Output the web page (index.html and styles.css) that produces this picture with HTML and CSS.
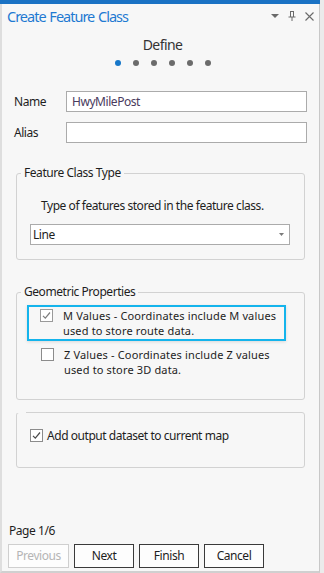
FILE: index.html
```html
<!DOCTYPE html>
<html>
<head>
<meta charset="utf-8">
<link rel="stylesheet" href="styles.css">
</head>
<body>
<div class="frame">
  <div class="panel">
    <div class="topbar"></div>
    <div class="header">
      <div class="title">Create Feature Class</div>
      <div class="tools">
        <svg class="ico" width="8" height="4" viewBox="0 0 8 4"><path d="M0 0H8L4 4Z" fill="#6a6a6a"/></svg>
        <svg class="ico" width="8" height="10" viewBox="0 0 8 10"><path d="M2 0.5H6M2.5 0.5V6M5.5 0.5V6M0.5 6H7.5M4 6V10" stroke="#6a6a6a" stroke-width="1" fill="none"/></svg>
        <svg class="ico" width="9" height="9" viewBox="0 0 9 9"><path d="M0.5 0.5L8.5 8.5M8.5 0.5L0.5 8.5" stroke="#6a6a6a" stroke-width="1.1" fill="none"/></svg>
      </div>
    </div>
    <div class="step">Define</div>
    <div class="dots">
      <span class="dot active"></span><span class="dot"></span><span class="dot"></span><span class="dot"></span><span class="dot"></span><span class="dot"></span>
    </div>

    <div class="row first">
      <div class="label">Name</div>
      <div class="input">HwyMilePost</div>
    </div>
    <div class="row">
      <div class="label">Alias</div>
      <div class="input"></div>
    </div>

    <fieldset class="group g1">
      <legend>Feature Class Type</legend>
      <div class="desc">Type of features stored in the feature class.</div>
      <div class="select">
        <span>Line</span>
        <svg width="5" height="3" viewBox="0 0 5 3"><path d="M0 0H5L2.5 3Z" fill="#7a7a7a"/></svg>
      </div>
    </fieldset>

    <fieldset class="group g2">
      <legend>Geometric Properties</legend>
      <div class="highlight">
        <div class="check-row">
          <span class="box checked dim"><svg width="11" height="11" viewBox="0 0 11 11"><path d="M2 5.8L4.3 8.2L9 2.5" stroke="#7d7d7d" stroke-width="1.2" fill="none"/></svg></span>
          <span class="ctext"><span class="ln">M Values - Coordinates include M values</span><span class="ln">used to store route data.</span></span>
        </div>
      </div>
      <div class="check-row z">
        <span class="box"></span>
        <span class="ctext"><span class="ln">Z Values - Coordinates include Z values</span><span class="ln">used to store 3D data.</span></span>
      </div>
    </fieldset>

    <fieldset class="group g3">
      <legend></legend>
      <div class="check-row single">
        <span class="box checked"><svg width="11" height="11" viewBox="0 0 11 11"><path d="M2 5.8L4.3 8.2L9 2.5" stroke="#4a4a4a" stroke-width="1.2" fill="none"/></svg></span>
        <span class="ctext">Add output dataset to current map</span>
      </div>
    </fieldset>

    <div class="footer">
      <div class="page">Page 1/6</div>
      <div class="buttons">
        <div class="btn disabled">Previous</div>
        <div class="btn">Next</div>
        <div class="btn">Finish</div>
        <div class="btn">Cancel</div>
      </div>
    </div>
  </div>
  <div class="strip"></div>
</div>
</body>
</html>
```

FILE: styles.css
```css
* { box-sizing: border-box; }
html, body {
  margin: 0;
  padding: 0;
}
body {
  font-family: "Noto Sans", "Open Sans", sans-serif;
  font-size: 12px;
  letter-spacing: -0.45px;
  color: #1e1e1e;
  background: #ececec;
}
.frame {
  width: 324px;
  height: 573px;
  display: flex;
  background: #e9e9e9;
}
.panel {
  width: 320px;
  height: 573px;
  display: flex;
  flex-direction: column;
  background: #f7f7f7;
  border-left: 2px solid #dedede;
  border-right: 1px solid #c8c8c8;
  border-bottom: 2px solid #d0d0d0;
}
.strip {
  flex: 1;
  background: #ebebeb;
}
.topbar {
  height: 4px;
  background: #1a72c4;
  margin-left: -2px;
  margin-right: -5px;
}
.header {
  height: 24px;
  display: flex;
  align-items: center;
  justify-content: space-between;
  padding-left: 5px;
  padding-right: 5px;
}
.title {
  font-size: 14.5px;
  color: #1f7ad2;
  line-height: 24px;
  letter-spacing: -1px;
  word-spacing: 1px;
}
.tools {
  display: flex;
  align-items: center;
  gap: 9px;
}
.ico { display: block; }
.step {
  margin-top: 8px;
  text-align: center;
  font-size: 14px;
  letter-spacing: -0.6px;
  line-height: 18px;
  color: #333;
  padding-left: 4px;
}
.dots {
  margin-top: 6px;
  display: flex;
  gap: 12px;
  justify-content: center;
  padding-left: 4px;
}
.dot {
  width: 6px;
  height: 6px;
  border-radius: 50%;
  background: #6b6b6b;
}
.dot.active { background: #1777c9; }

.row {
  display: flex;
  align-items: center;
  height: 21px;
  margin-top: 10px;
  padding-left: 12px;
}
.row.first { margin-top: 25px; }
.label {
  width: 52px;
  line-height: 21px;
}
.input {
  width: 241px;
  height: 21px;
  background: #fff;
  border: 1px solid #ababab;
  padding-left: 5px;
  line-height: 19px;
  color: #4a3b5d;
}

.group {
  margin: 22px 0 0 14px;
  width: 289px;
  padding: 0;
  border: 1px solid #d2d2d2;
  border-radius: 3px;
}
.group legend {
  margin-left: 4px;
  padding: 0 3px;
  line-height: 16px;
  color: #1e1e1e;
}
.g1 { padding: 0 14px 14px 13px; }
.g1 legend { margin-left: -9px; }
.desc {
  margin-top: 17px;
  margin-left: 11px;
  line-height: 16px;
}
.select {
  margin-top: 10px;
  width: 260px;
  height: 21px;
  border: 1px solid #ababab;
  background: #fff;
  display: flex;
  align-items: center;
  justify-content: space-between;
  padding: 0 5px 0 2px;
  line-height: 19px;
}
.select svg { display: block; }

.g2 {
  margin-top: 24px;
  padding: 0 0 22px 10px;
}
.g2 legend { margin-left: -6px; }
.highlight {
  margin-top: 5px;
  width: 259px;
  border: 2px solid #14b4ec;
  padding: 1px 0 1px 11px;
  box-shadow: 0 1px 3px rgba(0,0,0,0.12);
}
.check-row {
  display: flex;
  align-items: flex-start;
}
.box {
  width: 13px;
  height: 13px;
  border: 1px solid #8c8c8c;
  background: #fff;
  display: flex;
  align-items: center;
  justify-content: center;
  flex: none;
  margin-top: 1px;
}
.box.dim { border-color: #9a9a9a; }
.box svg { display: block; }
.ctext {
  margin-left: 10px;
  line-height: 15px;
  white-space: nowrap;
  display: flex;
  flex-direction: column;
}
.ln {
  display: block;
  height: 15px;
  line-height: 15px;
  font-size: 11px;
  letter-spacing: 0.15px;
}
.z {
  margin-top: 6px;
  padding-left: 14px;
}
.g3 {
  margin-top: 12px;
  padding: 16px 0 24px 13px;
}
.g3 legend {
  margin-left: -13px;
  padding: 0;
  width: 9px;
  height: 1px;
}
.single .box { margin-top: 0; }
.single .ctext {
  margin-left: 4px;
  line-height: 14px;
}

.footer {
  margin-top: auto;
  padding: 0 0 3px 6px;
}
.page {
  line-height: 16px;
  margin-left: 1px;
}
.buttons {
  margin-top: 5px;
  display: flex;
  gap: 5px;
}
.btn {
  width: 60px;
  height: 24px;
  border: 1px solid #3a3a3a;
  background: #fdfdfd;
  text-align: center;
  line-height: 22px;
}
.btn.disabled {
  width: 61px;
  border-color: #cfcfcf;
  color: #b5b5b5;
}
```
